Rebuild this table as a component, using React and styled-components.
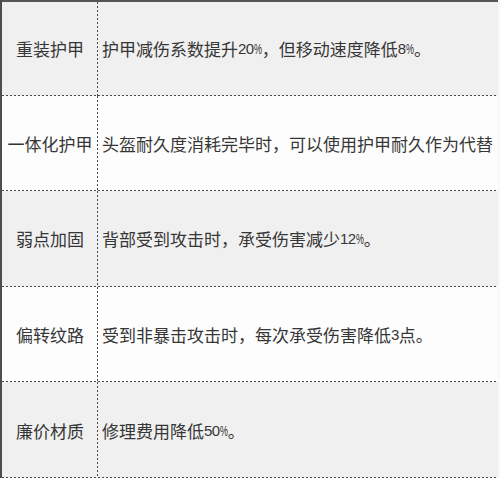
import React from 'react'
import styled, { createGlobalStyle } from 'styled-components'

const GlobalStyle = createGlobalStyle`
  html, body {
    margin: 0;
    padding: 0;
    background: #ffffff;
  }
  * {
    box-sizing: border-box;
  }
`

const dashH = 'repeating-linear-gradient(90deg, #4a4a4a 0 2px, transparent 2px 4px)'
const dashV = 'repeating-linear-gradient(180deg, #4a4a4a 0 2px, transparent 2px 4px)'

const Table = styled.div`
  width: 500px;
  height: 478px;
  display: grid;
  grid-template-rows: repeat(5, 1fr);
  border-left: 2px solid #4d4d4d;
  border-right: 2px solid #f8f8f8;
  font-family: "Noto Sans CJK SC", "Liberation Sans", sans-serif;
  font-size: 17px;
  color: #363636;
`

const Row = styled.div`
  display: grid;
  grid-template-columns: 96px 1fr;
  background: ${dashH} left bottom / 100% 1px no-repeat,
    ${(p) => (p.$shaded ? '#f0f0f0' : '#fdfdfd')};
  border-top: ${(p) => (p.$first ? '2px solid #555555' : 'none')};
`

const Label = styled.div`
  display: flex;
  align-items: center;
  justify-content: center;
  white-space: nowrap;
  background: ${dashV} right top / 1px 100% no-repeat;
`

const Desc = styled.div`
  display: flex;
  align-items: center;
  padding-left: 4px;
  white-space: nowrap;
`

const Num = styled.span`
  font-family: "Liberation Sans", sans-serif;
  font-size: 15px;
  letter-spacing: -0.6px;
`

// the source font draws a very narrow percent sign
const Pct = styled.span`
  display: inline-block;
  font-family: "Liberation Sans", sans-serif;
  font-size: 15px;
  transform: scaleX(0.6);
  transform-origin: left center;
  margin-right: -5px;
`

const rows = [
  { name: '重装护甲', text: '护甲减伤系数提升20%，但移动速度降低8%。' },
  { name: '一体化护甲', text: '头盔耐久度消耗完毕时，可以使用护甲耐久作为代替' },
  { name: '弱点加固', text: '背部受到攻击时，承受伤害减少12%。' },
  { name: '偏转纹路', text: '受到非暴击攻击时，每次承受伤害降低3点。' },
  { name: '廉价材质', text: '修理费用降低50%。' },
]

function renderText(text) {
  return text.split(/(\d+|%)/).filter(Boolean).map((part, i) => {
    if (part === '%') return <Pct key={i}>%</Pct>
    if (/^\d+$/.test(part)) return <Num key={i}>{part}</Num>
    return <span key={i}>{part}</span>
  })
}

export default function App() {
  return (
    <>
      <GlobalStyle />
      <Table>
        {rows.map((row, i) => (
          <Row key={row.name} $shaded={i % 2 === 0} $first={i === 0}>
            <Label>{row.name}</Label>
            <Desc>{renderText(row.text)}</Desc>
          </Row>
        ))}
      </Table>
    </>
  )
}
